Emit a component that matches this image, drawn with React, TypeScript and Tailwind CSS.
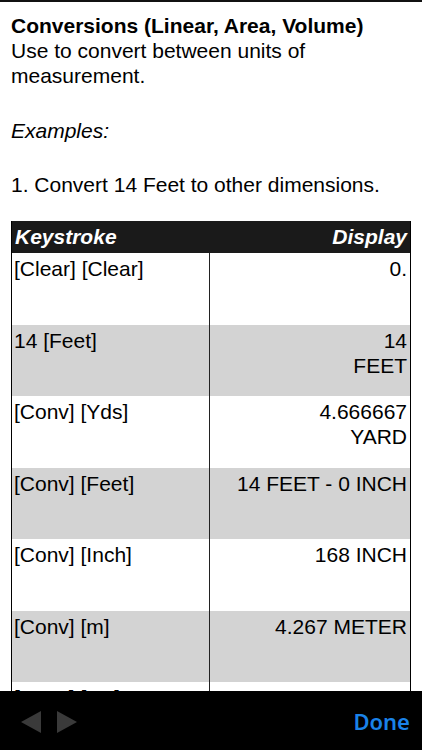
const rows: { key: string; display: string[]; gray: boolean }[] = [
  { key: "[Clear] [Clear]", display: ["0."], gray: false },
  { key: "14 [Feet]", display: ["14", "FEET"], gray: true },
  { key: "[Conv] [Yds]", display: ["4.666667", "YARD"], gray: false },
  { key: "[Conv] [Feet]", display: ["14 FEET - 0 INCH"], gray: true },
  { key: "[Conv] [Inch]", display: ["168 INCH"], gray: false },
  { key: "[Conv] [m]", display: ["4.267 METER"], gray: true },
  { key: "[Conv] [cm]", display: ["426.72", "CM"], gray: false },
]

export default function App() {
  return (
    <div className="w-[422px] h-[750px] flex flex-col bg-white overflow-hidden text-black" style={{ fontFamily: '"Liberation Sans", Arial, sans-serif' }}>
      <div className="h-[2px] bg-[#111] shrink-0" />
      <div className="flex-1 overflow-hidden pl-[11px] pr-[11px]">
        <div className="pt-[11px] text-[21px] leading-[25px]">
          <h1 className="font-bold">Conversions (Linear, Area, Volume)</h1>
          <p>Use to convert between units of measurement.</p>
          <p className="italic mt-[30px]">Examples:</p>
          <p className="mt-[29px]">1. Convert 14 Feet to other dimensions.</p>
        </div>

        <div className="mt-[24px] w-[400px] border-x-[1.5px] border-black">
          <div className="flex h-[32px] items-center bg-[#1a1a1a] text-white font-bold italic text-[21px] px-[3px]">
            <span className="flex-1">Keystroke</span>
            <span>Display</span>
          </div>
          {rows.map((r) => (
            <div key={r.key} className={`flex h-[71.5px] text-[21px] leading-[25px] ${r.gray ? "bg-[#d3d3d3]" : "bg-white"}`}>
              <div className="w-[198px] pl-[2px] pt-[3px] border-r-[1.5px] border-[#222]">{r.key}</div>
              <div className="flex-1 text-right pr-[3px] pt-[3px]">
                {r.display.map((d) => (
                  <div key={d}>{d}</div>
                ))}
              </div>
            </div>
          ))}
        </div>
      </div>

      <div className="h-[59px] shrink-0 bg-black flex items-center justify-between pl-[21px] pr-[12px]">
        <div className="flex items-center gap-[16px] pt-[2px]">
          <svg width="20" height="22" viewBox="0 0 20 22">
            <polygon points="20,0 20,22 0,11" fill="#3a3a3a" />
          </svg>
          <svg width="20" height="22" viewBox="0 0 20 22">
            <polygon points="0,0 0,22 20,11" fill="#3a3a3a" />
          </svg>
        </div>
        <span className="text-[#1a82e8] text-[22px] font-semibold pt-[2px]" style={{ fontFamily: '"Noto Sans", "Liberation Sans", sans-serif' }}>Done</span>
      </div>
    </div>
  )
}
